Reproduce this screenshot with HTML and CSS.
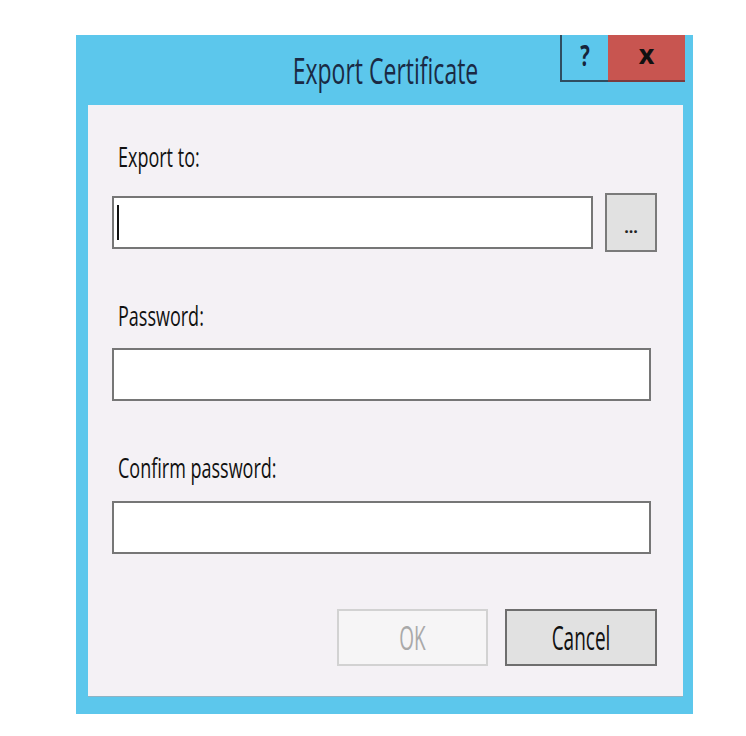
FILE: index.html
```html
<!DOCTYPE html>
<html lang="en">
<head>
  <meta charset="UTF-8">
  <title>Export Certificate</title>
  <link rel="stylesheet" href="styles.css">
</head>
<body>

<div class="dialog">
  <div class="titlebar">
    <span></span>
    <h1 class="title"><span class="tall">Export Certificate</span></h1>
    <div class="controls">
      <div class="ctl help"><span class="glyph">?</span></div>
      <div class="ctl close"><span class="glyph">x</span></div>
    </div>
  </div>

  <div class="panel">
    <div class="label first"><span class="tall">Export to:</span></div>
    <div class="row">
      <div class="field wide"><span class="caret"></span></div>
      <button class="browse">...</button>
    </div>

    <div class="label second"><span class="tall">Password:</span></div>
    <div class="field full pw"></div>

    <div class="label third"><span class="tall">Confirm password:</span></div>
    <div class="field full confirm"></div>

    <div class="actions">
      <button class="btn ok" disabled><span class="tall">OK</span></button>
      <button class="btn cancel"><span class="tall">Cancel</span></button>
    </div>
  </div>
</div>

</body>
</html>
```

FILE: styles.css
```css
body { margin: 0; background: #fff; font-family: "Open Sans", "Noto Sans", sans-serif; }

.tall { display: inline-block; transform: scaleY(1.5); }

.dialog {
  box-sizing: border-box;
  width: 617px;
  height: 679px;
  margin: 35px 0 0 76px;
  padding: 0 10px 17px 12px;
  background: #5cc7ec;
  display: flex;
  flex-direction: column;
}

/* title bar */
.titlebar {
  height: 70px;
  flex: none;
  display: grid;
  grid-template-columns: 1fr auto 1fr;
}
.title {
  margin: 0;
  align-self: center;
  font-size: 23px;
  font-weight: normal;
  color: #1a2a44;
  line-height: 30px;
}
.title .tall { transform: scaleY(1.55); }
.controls {
  justify-self: end;
  align-self: start;
  display: flex;
  margin-right: -2px;
}
.ctl {
  box-sizing: border-box;
  height: 47px;
  display: flex;
  align-items: center;
  justify-content: center;
  font-weight: bold;
}
.help {
  width: 48px;
  border-left: 2px solid #2f4d60;
  border-bottom: 2px solid #2f4d60;
  color: #16243a;
  font-size: 20px;
  padding-bottom: 4px;
}
.help .glyph { display: inline-block; transform: scaleY(1.45); }
.close {
  width: 77px;
  background: #c85550;
  border-bottom: 2px solid #7c3b3d;
  color: #111;
  font-size: 27px;
  padding-bottom: 8px;
}

/* content */
.panel {
  flex: 1;
  background: #f4f1f5;
  border-bottom: 1px solid #8fb3c4;
  padding: 35px 26px 0 24px;
}
.label {
  height: 32px;
  line-height: 32px;
  padding-left: 6px;
  font-size: 18px;
  color: #111;
}
.label.second { margin-top: 47px; }
.label.third { margin-top: 50px; }

.row {
  margin-top: 21px;
  height: 59px;
  display: flex;
  align-items: center;
}
.field {
  box-sizing: border-box;
  height: 53px;
  background: #fff;
  border: 2px solid #767676;
  display: flex;
  align-items: center;
  padding-left: 3px;
}
.field.wide { width: 481px; }
.field.full { width: 539px; }
.field.pw { margin-top: 17px; }
.field.confirm { margin-top: 18px; }
.caret { width: 2px; height: 35px; background: #111; }

.browse {
  box-sizing: border-box;
  width: 52px;
  height: 59px;
  margin-left: 12px;
  background: #e1e1e1;
  border: 2px solid #7a7a7a;
  font-family: inherit;
  font-size: 16px;
  font-weight: bold;
  color: #222;
  padding: 8px 0 0;
}

.actions {
  margin-top: 55px;
  display: flex;
  justify-content: flex-end;
  gap: 17px;
}
.btn {
  box-sizing: border-box;
  width: 152px;
  height: 57px;
  font-family: inherit;
  font-size: 19px;
  padding: 0;
}
.btn .tall { transform: scaleY(1.7); }
.ok {
  width: 151px;
  background: #f6f5f6;
  border: 2px solid #d2d2d2;
  color: #a9a9a9;
}
.cancel {
  background: #e1e1e1;
  border: 2px solid #6e6e6e;
  color: #111;
}
```
